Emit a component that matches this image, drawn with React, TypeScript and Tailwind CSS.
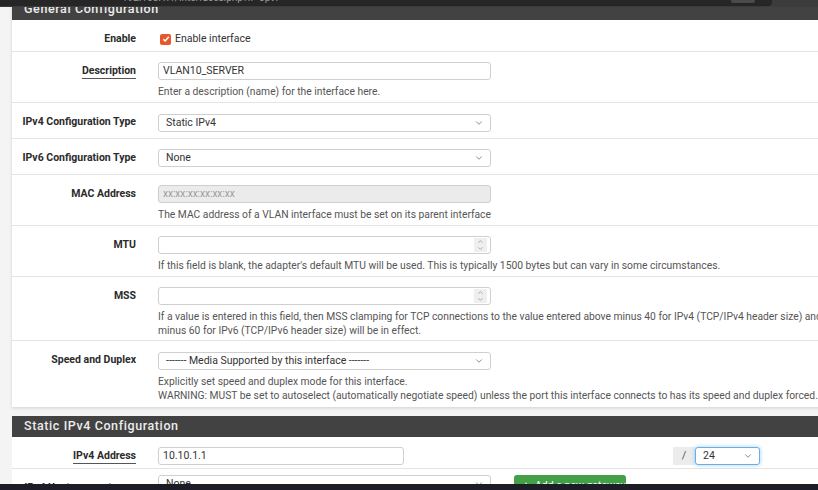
import React from 'react';
import { ChevronDown, ChevronUp, Plus } from 'lucide-react';

interface RowProps {
  label: string;
  height: string;
  underline?: boolean;
  border?: boolean;
  children: React.ReactNode;
}

const Row: React.FC<RowProps> = ({ label, height, underline, border = true, children }) => (
  <div className={`flex ${height} ${border ? 'border-b border-[#e4e4e4]' : ''}`}>
    <div className="w-[146px] shrink-0 pr-[22px] pt-[11px] text-right text-[10.5px] font-bold leading-[16px] text-[#2b2b2b]">
      <span className={underline ? 'border-b border-[#555] pb-[1px]' : ''}>{label}</span>
    </div>
    <div className="flex-1 pt-[10px]">{children}</div>
  </div>
);

const Select: React.FC<{ value: string; width?: string; focus?: boolean }> = ({ value, width = 'w-[333px]', focus }) => (
  <div
    className={`flex h-[18px] ${width} items-center justify-between rounded-[3px] border bg-white pl-[7px] pr-[6px] ${
      focus ? 'border-[#66afe9] shadow-[0_0_4px_rgba(102,175,233,0.6)]' : 'border-[#cfcfcf]'
    }`}
  >
    <span className="text-[10.5px] leading-[16px] text-[#333]">{value}</span>
    <ChevronDown size={10} strokeWidth={1.6} className="text-[#555]" />
  </div>
);

const TextInput: React.FC<{ value?: string; disabled?: boolean; number?: boolean; width?: string }> = ({
  value = '',
  disabled,
  number,
  width = 'w-[333px]',
}) => (
  <div
    className={`flex h-[18px] ${width} items-center justify-between rounded-[3px] border border-[#cfcfcf] pl-[4px] pr-[3px] ${
      disabled ? 'bg-[#ebebeb]' : 'bg-white'
    }`}
  >
    <span
      className={
        disabled ? 'text-[10px] leading-[16px] text-[#9a9a9a]' : 'text-[10.5px] leading-[16px] text-[#333]'
      }
    >
      {value}
    </span>
    {number && (
      <div className="flex h-[14px] w-[13px] flex-col items-center justify-center bg-[#efefef] text-[#777]">
        <ChevronUp size={7} strokeWidth={2} />
        <ChevronDown size={7} strokeWidth={2} />
      </div>
    )}
  </div>
);

const Help: React.FC<{ children: React.ReactNode }> = ({ children }) => (
  <p className="mt-[5px] whitespace-nowrap text-[10.3px] leading-[14px] text-[#555]">{children}</p>
);

const PanelTitle: React.FC<{ title: string; height: string }> = ({ title, height }) => (
  <div className={`flex ${height} items-end bg-[#424242] pb-[3px] pl-[12px]`}>
    <span className="text-[12.5px] font-medium leading-[16px] tracking-[0.6px] text-[#ececec]">{title}</span>
  </div>
);

const App: React.FC = () => {
  return (
    <div
      className="relative h-[490px] w-[818px] overflow-hidden bg-[#f4f4f4]"
      style={{ fontFamily: 'Roboto, "Liberation Sans", sans-serif' }}
    >
      <div className="w-[1020px] pl-[12px]">
        <div className="bg-white shadow-[0_1px_3px_rgba(0,0,0,0.15)]">
          <PanelTitle title="General Configuration" height="h-[20px]" />

          <div className="flex h-[32px] border-b border-[#e4e4e4]">
            <div className="w-[146px] shrink-0 pr-[22px] pt-[11px] text-right text-[10.5px] font-bold leading-[16px] text-[#2b2b2b]">
              Enable
            </div>
            <div className="mt-[11px] flex h-[16px] items-center gap-[4px]">
              <div className="ml-[2px] flex h-[11px] w-[11px] items-center justify-center rounded-[2px] bg-[#e6582c]">
                <svg width="8" height="8" viewBox="0 0 8 8">
                  <path d="M1.3 4.2 L3.2 6 L6.8 1.8" fill="none" stroke="white" strokeWidth="1.5" />
                </svg>
              </div>
              <span className="text-[10.5px] leading-[16px] text-[#333]">Enable interface</span>
            </div>
          </div>

          <Row label="Description" height="h-[51px]" underline>
            <TextInput value="VLAN10_SERVER" />
            <Help>Enter a description (name) for the interface here.</Help>
          </Row>

          <Row label="IPv4 Configuration Type" height="h-[36px]">
            <div className="pt-[1px]">
              <Select value="Static IPv4" />
            </div>
          </Row>

          <Row label="IPv6 Configuration Type" height="h-[36px]">
            <Select value="None" />
          </Row>

          <Row label="MAC Address" height="h-[51px]">
            <TextInput value="xx:xx:xx:xx:xx:xx" disabled />
            <Help>The MAC address of a VLAN interface must be set on its parent interface</Help>
          </Row>

          <Row label="MTU" height="h-[51px]">
            <TextInput number />
            <Help>
              If this field is blank, the adapter's default MTU will be used. This is typically 1500 bytes but can vary in
              some circumstances.
            </Help>
          </Row>

          <Row label="MSS" height="h-[64px]">
            <TextInput number />
            <Help>
              If a value is entered in this field, then MSS clamping for TCP connections to the value entered above minus
              40 for IPv4 (TCP/IPv4 header size) and
              <br />
              minus 60 for IPv6 (TCP/IPv6 header size) will be in effect.
            </Help>
          </Row>

          <Row label="Speed and Duplex" height="h-[66px]" border={false}>
            <div className="pt-[1px]">
              <Select value="------- Media Supported by this interface -------" />
            </div>
            <Help>
              Explicitly set speed and duplex mode for this interface.
              <br />
              WARNING: MUST be set to autoselect (automatically negotiate speed) unless the port this interface connects
              to has its speed and duplex forced.
            </Help>
          </Row>
        </div>

        <div className="mt-[9px] bg-white">
          <PanelTitle title="Static IPv4 Configuration" height="h-[21px]" />
          <Row label="IPv4 Address" height="h-[32px]" underline>
            <div className="flex items-center">
              <TextInput value="10.10.1.1" width="w-[246px]" />
              <div className="ml-[269px] flex h-[18px] w-[22px] items-center justify-center bg-[#ececec] text-[11px] text-[#555]">
                /
              </div>
              <Select value="24" width="w-[65px]" focus />
            </div>
          </Row>
          <Row label="IPv4 Upstream gateway" height="h-[40px]" border={false}>
            <div className="-mt-[4px] flex items-start">
              <Select value="None" />
              <button className="ml-[23px] flex h-[22px] w-[112px] items-center gap-[4px] whitespace-nowrap rounded-[3px] bg-[#43a047] pl-[7px] text-[10.5px] leading-[16px] text-white">
                <Plus size={10} strokeWidth={3} />
                Add a new gateway
              </button>
            </div>
          </Row>
        </div>
      </div>

      <div className="absolute left-0 top-0 flex h-[7px] w-[818px]">
        <div className="relative h-[7px] w-[772px] overflow-hidden rounded-br-[4px] border-b border-[#3a3a3a] bg-[#262626]">
          <span className="absolute left-[122px] top-[-8px] whitespace-nowrap text-[10px] leading-[12px] text-[#9a9a9a]">
            192.168.1.1/interfaces.php?if=opt1
          </span>
          <div className="absolute left-[731px] top-[-3px] h-[6px] w-[24px] rounded-[2px] bg-[#4a4a4a]" />
        </div>
        <div className="h-[7px] flex-1 bg-[#3c3c3c]" />
      </div>

      <div className="absolute bottom-0 left-0 h-[6px] w-[818px] bg-[#1c1d27]" />
    </div>
  );
};

export default App;
